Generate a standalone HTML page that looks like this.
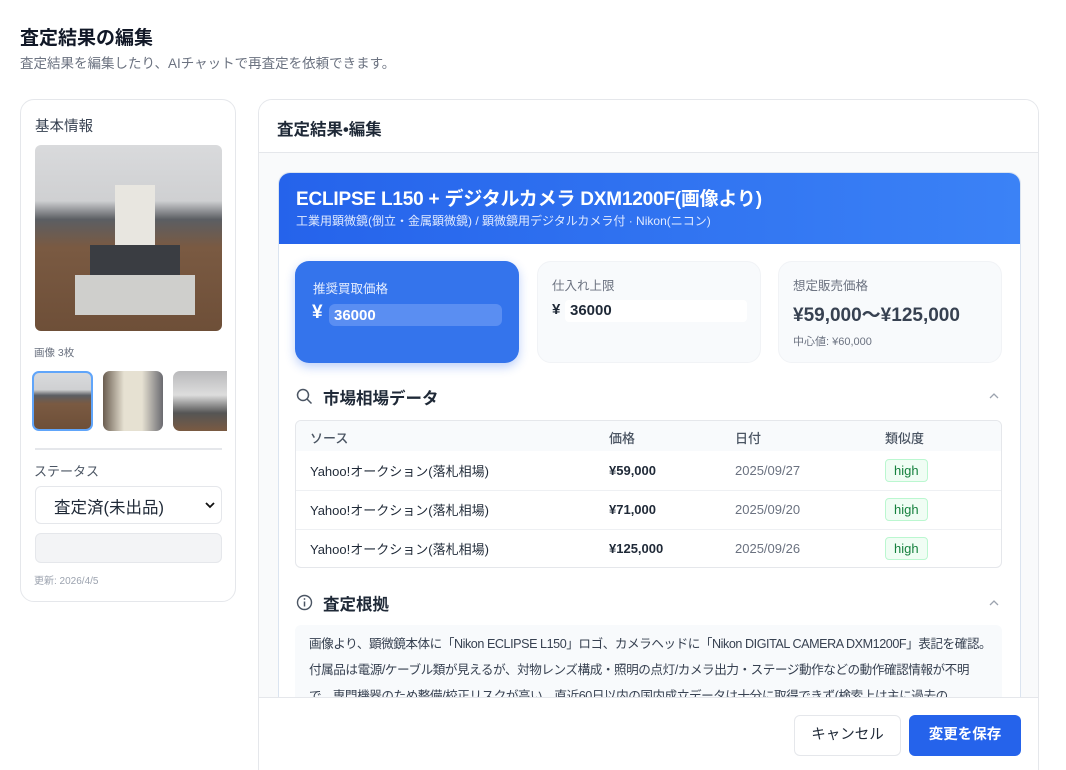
<!DOCTYPE html>
<html><head><meta charset="utf-8"><style>
*{box-sizing:border-box;margin:0;padding:0}
html,body{width:1066px;height:770px;overflow:hidden}
body{background:#fff;font-family:"Liberation Sans","Noto Sans CJK JP",sans-serif;color:#1f2937;position:relative}
.abs{position:absolute}
.h1{left:20px;top:23px;font-size:19px;font-weight:700;color:#111827}
.sub{left:20px;top:52px;font-size:13.5px;color:#6b7280}
.lc{left:20px;top:99px;width:216px;height:503px;border:1px solid #e5e7eb;border-radius:14px}
.photo{border-radius:6px;overflow:hidden;background:linear-gradient(180deg,#d9dadc 0%,#cfd0d2 30%,#5b5e63 40%,#7a5a42 55%,#6e4f38 100%)}
.rc{left:258px;top:99px;width:781px;height:700px;border:1px solid #e5e7eb;border-radius:14px;background:#f9fafb;overflow:hidden}
.inner{left:19px;top:72px;width:743px;height:600px;background:#fff;border:1px solid #dbe4f0;border-radius:12px;overflow:hidden}
.pc{border-radius:14px;position:absolute;top:88px;width:224px;height:102px}
td,th{text-align:left;font-size:13px}
th{padding-top:3px}
.badge{display:inline-block;border:1px solid #bbf7d0;background:#f0fdf4;color:#15803d;border-radius:4px;padding:3px 8px;font-size:13px}
</style></head><body>
<div class="abs h1">査定結果の編集</div>
<div class="abs sub">査定結果を編集したり、AIチャットで再査定を依頼できます。</div>

<div class="abs lc">
 <div class="abs" style="left:14px;top:15px;font-size:14.5px;color:#374151">基本情報</div>
 <div class="abs photo" style="left:14px;top:45px;width:187px;height:186px">
  <div class="abs" style="left:80px;top:40px;width:40px;height:110px;background:#e8e6e0"></div>
  <div class="abs" style="left:55px;top:100px;width:90px;height:40px;background:#3a3d42"></div>
  <div class="abs" style="left:40px;top:130px;width:120px;height:40px;background:#cfcfcc"></div>
 </div>
 <div class="abs" style="left:13px;top:245px;font-size:10.5px;color:#6b7280">画像 3枚</div>
 <div class="abs photo" style="left:11px;top:271px;width:61px;height:60px;border:2px solid #60a5fa;border-radius:7px"></div>
 <div class="abs photo" style="left:82px;top:271px;width:60px;height:60px;border-radius:7px;background:linear-gradient(90deg,#6a5d50,#e6e1d2 35%,#e6e1d2 65%,#6a6a70)"></div>
 <div class="abs photo" style="left:152px;top:271px;width:54px;height:60px;border-radius:7px 0 0 7px;background:linear-gradient(180deg,#b9b9bb,#ddd 40%,#555 70%,#7a5a42)"></div>
 <div class="abs" style="left:14px;top:348px;width:187px;height:2px;background:#e5e7eb"></div>
 <div class="abs" style="left:13px;top:361px;font-size:13px;color:#4b5563">ステータス</div>
 <div class="abs" style="left:14px;top:386px;width:187px;height:38px;border:1px solid #e5e7eb;border-radius:6px;font-size:16.5px;padding:7px 0 0 18px;color:#1f2937">査定済(未出品)
  <svg class="abs" style="right:6px;top:15px" width="10" height="7" viewBox="0 0 10 7"><path d="M1 1l4 4 4-4" fill="none" stroke="#111" stroke-width="1.8"/></svg></div>
 <div class="abs" style="left:14px;top:433px;width:187px;height:30px;border:1px solid #e5e7eb;border-radius:6px;background:#f3f4f6"></div>
 <div class="abs" style="left:13px;top:472px;font-size:10px;color:#9ca3af">更新: 2026/4/5</div>
</div>

<div class="abs rc">
 <div class="abs" style="left:0;top:0;width:100%;height:53px;background:#fff;border-bottom:1px solid #e5e7eb"></div>
 <div class="abs" style="left:18px;top:16px;font-size:16.5px;font-weight:700;color:#1f2937">査定結果•編集</div>
 <div class="abs inner">
  <div class="abs" style="left:0;top:0;width:100%;height:71px;background:linear-gradient(90deg,#2563eb,#3b82f6)"></div>
  <div class="abs" style="left:17px;top:11px;font-size:19px;font-weight:700;color:#fff;letter-spacing:-0.2px">ECLIPSE L150 + デジタルカメラ DXM1200F(画像より)</div>
  <div class="abs" style="left:17px;top:39px;font-size:12px;color:#e0eaff">工業用顕微鏡(倒立・金属顕微鏡) / 顕微鏡用デジタルカメラ付 · Nikon(ニコン)</div>
  <div class="pc" style="left:16px;background:#3474ec;box-shadow:0 4px 10px rgba(37,99,235,.3)">
   <div class="abs" style="left:18px;top:17px;font-size:12.5px;color:#e6eeff">推奨買取価格</div>
   <div class="abs" style="left:17px;top:41px;font-size:19px;font-weight:700;color:#fff">¥</div>
   <div class="abs" style="left:34px;top:43px;width:173px;height:22px;background:#5a8ef2;border-radius:6px;font-size:15px;font-weight:700;color:#fff;padding:3px 0 0 5px">36000</div>
  </div>
  <div class="pc" style="left:258px;background:#f8fafc;border:1px solid #f1f3f6">
   <div class="abs" style="left:14px;top:13px;font-size:12.5px;color:#6b7280">仕入れ上限</div>
   <div class="abs" style="left:14px;top:39px;font-size:15px;font-weight:700;color:#1f2937">¥</div>
   <div class="abs" style="left:27px;top:38px;width:182px;height:22px;background:#fff;border-radius:4px;font-size:15px;font-weight:700;color:#1f2937;padding:2px 0 0 5px">36000</div>
  </div>
  <div class="pc" style="left:499px;background:#f8fafc;border:1px solid #f1f3f6">
   <div class="abs" style="left:14px;top:13px;font-size:12.5px;color:#6b7280">想定販売価格</div>
   <div class="abs" style="left:14px;top:38px;font-size:19px;font-weight:700;color:#374151">¥59,000〜¥125,000</div>
   <div class="abs" style="left:14px;top:71px;font-size:11px;color:#6b7280">中心値: ¥60,000</div>
  </div>
  <svg class="abs" style="left:17px;top:215px" width="17" height="17" viewBox="0 0 17 17"><circle cx="7" cy="7" r="5.5" fill="none" stroke="#4b5563" stroke-width="1.5"/><path d="M11 11l4.5 4.5" stroke="#4b5563" stroke-width="1.5"/></svg>
  <div class="abs" style="left:44px;top:212px;font-size:16.5px;font-weight:700;color:#1f2937">市場相場データ</div>
  <svg class="abs" style="left:710px;top:220px" width="10" height="6" viewBox="0 0 10 6"><path d="M1 5l4-4 4 4" fill="none" stroke="#9ca3af" stroke-width="1.3"/></svg>
  <div class="abs" style="left:16px;top:247px;width:707px;height:148px;border:1px solid #e5e7eb;border-radius:6px;overflow:hidden">
   <table style="width:100%;border-collapse:collapse">
    <tr style="background:#f8fafc;height:30px"><th style="padding-left:14px;font-weight:500;color:#4b5563;width:313px">ソース</th><th style="font-weight:500;color:#4b5563;width:126px">価格</th><th style="font-weight:500;color:#4b5563;width:150px">日付</th><th style="font-weight:500;color:#4b5563">類似度</th></tr>
    <tr style="height:39px;border-bottom:1px solid #eef0f3"><td style="padding-left:14px">Yahoo!オークション(落札相場)</td><td style="font-weight:700">¥59,000</td><td style="color:#6b7280">2025/09/27</td><td><span class="badge">high</span></td></tr>
    <tr style="height:39px;border-bottom:1px solid #eef0f3"><td style="padding-left:14px">Yahoo!オークション(落札相場)</td><td style="font-weight:700">¥71,000</td><td style="color:#6b7280">2025/09/20</td><td><span class="badge">high</span></td></tr>
    <tr style="height:39px"><td style="padding-left:14px">Yahoo!オークション(落札相場)</td><td style="font-weight:700">¥125,000</td><td style="color:#6b7280">2025/09/26</td><td><span class="badge">high</span></td></tr>
   </table>
  </div>
  <svg class="abs" style="left:17px;top:421px" width="17" height="17" viewBox="0 0 17 17"><circle cx="8.5" cy="8.5" r="7" fill="none" stroke="#4b5563" stroke-width="1.4"/><path d="M8.5 7.5v5" stroke="#4b5563" stroke-width="1.5"/><circle cx="8.5" cy="5" r=".9" fill="#4b5563"/></svg>
  <div class="abs" style="left:44px;top:418px;font-size:16.5px;font-weight:700;color:#1f2937">査定根拠</div>
  <svg class="abs" style="left:710px;top:427px" width="10" height="6" viewBox="0 0 10 6"><path d="M1 5l4-4 4 4" fill="none" stroke="#9ca3af" stroke-width="1.3"/></svg>
  <div class="abs" style="left:16px;top:452px;width:707px;height:150px;background:#f8fafc;border-radius:6px;padding:6px 0 0 14px;font-size:12.6px;line-height:26px;letter-spacing:-0.45px;color:#374151;white-space:nowrap;overflow:hidden">画像より、顕微鏡本体に「Nikon ECLIPSE L150」ロゴ、カメラヘッドに「Nikon DIGITAL CAMERA DXM1200F」表記を確認。<br>付属品は電源/ケーブル類が見えるが、対物レンズ構成・照明の点灯/カメラ出力・ステージ動作などの動作確認情報が不明<br>で、専門機器のため整備/校正リスクが高い。直近60日以内の国内成立データは十分に取得できず(検索上は主に過去の</div>
 </div>
 <div class="abs" style="left:0;top:597px;width:100%;height:110px;background:#fff;border-top:1px solid #e5e7eb"></div>
 <div class="abs" style="left:535px;top:615px;width:107px;height:41px;border:1px solid #e5e7eb;border-radius:6px;background:#fff;font-size:14.5px;color:#1f2937;text-align:center;line-height:39px">キャンセル</div>
 <div class="abs" style="left:650px;top:615px;width:112px;height:41px;border-radius:6px;background:#2563eb;font-size:14.5px;font-weight:700;color:#fff;text-align:center;line-height:41px">変更を保存</div>
</div>
</body></html>
